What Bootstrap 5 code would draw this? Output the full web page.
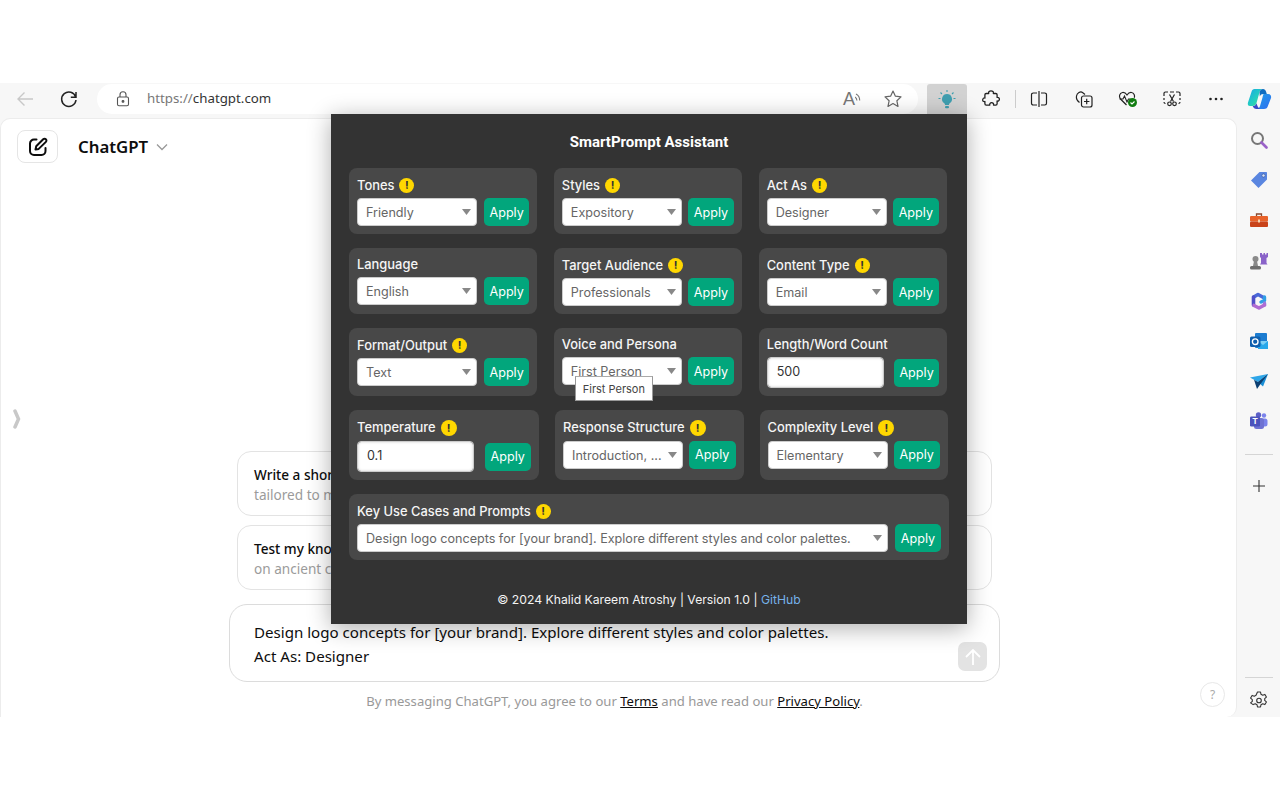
<!DOCTYPE html>
<html lang="en">
<head>
<meta charset="utf-8">
<title>SmartPrompt Assistant</title>
<link href="https://cdn.jsdelivr.net/npm/bootstrap@5.3.0/dist/css/bootstrap.min.css" rel="stylesheet">
<style>
html,body{height:800px;overflow:hidden;background:#fff}
body{font-family:"Noto Sans",sans-serif;color:#0d0d0d}
.band{height:83px}
.browser{height:634px;background:#f7f7f7}
.toolbar{height:35px;padding:1px 0 4px 3px}
.tb-slot{width:44px;height:30px;flex:none}
.tb-wide{width:46px}
.tb-last{width:42px}
.urlbar{flex:none;width:821px;height:30px;margin-left:6px;border-radius:15px;background:#fff;padding:0 15px 0 19px;font-size:13.3px;color:#777}
.urlbar b{font-weight:400;color:#333}
.url-text{margin-left:17px}
.ra-a{font-family:"Liberation Sans",sans-serif;font-size:18px;line-height:22px;color:#777}
.ra-gap{margin-right:20px}
.active-ext{flex:none;width:40px;height:30px;background:#d2d2d2;border-radius:3px 3px 0 0;margin:0 2px 0 9px}
.sep-v{flex:none;width:1px;height:18px;background:#ccc;margin-left:2px}
.chat{width:1237px;height:599px;background:#fff;border:1px solid #ececec;border-bottom:0;border-radius:10px 10px 10px 0;padding-right:8px;position:relative}
.new-btn{width:41px;height:33px;border:1px solid #e5e5e5;border-radius:8px;margin:11px 0 0 16px}
.brand-name{font-size:16.8px;font-weight:600;margin:11px 0 0 20px;line-height:33px;color:#0d0d0d}
.sugg{width:755px;height:65px;border:1px solid #e3e3e3;border-radius:14px;padding:13px 16px;font-size:13.6px;line-height:20px;margin-bottom:9px}
.sugg .t1{font-weight:500}
.sugg .t2{color:#9b9b9b}
.chat-foot{margin-bottom:6px}
.composer{width:771px;height:78px;border:1px solid #dcdcdc;border-radius:18px;padding:15px 24px;font-size:15.1px;line-height:24px;margin-top:5px;position:relative}
.send{position:absolute;right:12px;bottom:10px;width:29px;height:29px;background:#e3e3e3;border-radius:7px}
.legal{font-size:13.1px;line-height:20px;color:#999;margin-top:9px}
.legal a{color:#0d0d0d}
.handle{position:absolute;left:11px;top:286px}
.help{position:absolute;right:11px;bottom:10px;width:25px;height:25px;border:1px solid #e8e8e8;border-radius:50%;font-size:12px;color:#aaa}
.side{width:43px;height:599px}
.side-slot{height:40.2px;flex:none}
.side-first{margin-top:2px}
.side-sep{width:28px;height:1px;background:#d5d5d5;flex:none}
.sep-top{margin-top:12px}
.plus-slot{margin-top:11px}
.sep-bot{margin-bottom:5px}
.gear-slot{height:34px}
.popup{position:absolute;left:331px;top:114px;width:636px;height:510px;background:#333;box-shadow:0 4px 22px rgba(0,0,0,.32);padding:0 0 0 18px;font-family:"Inter",sans-serif;color:#fff}
.pop-title{font-family:"Roboto",sans-serif;font-weight:700;font-size:15px;line-height:20px;text-align:center;margin:18px 0 16px -18px}
.grid3{display:grid;grid-template-columns:repeat(3,1fr);column-gap:16.5px;width:598px;margin-bottom:14px}
.grid3b{grid-template-columns:190px 188.5px 188.5px;column-gap:16px;width:599px}
.pnl{background:#484848;border-radius:8px;padding:8px}
.pnl-wide{width:600px}
.lab{font-size:12.9px;font-weight:500;line-height:17px;height:21px;white-space:nowrap;color:#f5f5f5;display:flex;align-items:flex-start}
.lab-i{height:22px;line-height:19px}
.lab-t{height:23px;line-height:19px}
.warn{display:inline-flex;align-items:center;justify-content:center;flex:none;width:15px;height:15px;background:#ffd700;border-radius:50%;color:#333;font-size:11px;font-weight:700;line-height:1;margin:2px 0 0 5px}
.lab-t .warn{width:16px;height:16px}
.sel.form-select{width:120px;flex:none;height:28px;min-height:0;padding:1px 18px 0 8px;font-size:12.6px;line-height:25px;color:#666;border:1px solid #ccc;border-radius:4px;background-image:url("data:image/svg+xml,%3Csvg xmlns='http://www.w3.org/2000/svg' width='9' height='6'%3E%3Cpath d='M0 0h9L4.500 6z' fill='%23888'/%3E%3C/svg%3E");background-position:right 5px center;background-size:9px 6px;white-space:nowrap;overflow:hidden}
.sel-long.form-select{width:531px}
.num.form-control{width:117px;flex:none;height:31px;min-height:0;padding:0 9px 2px;font-size:12.6px;color:#333;border:1px solid #ccc;border-radius:4px;box-shadow:inset 0 0 3px rgba(0,0,0,.18)}
.go.btn{flex:1 1 0;min-width:0;height:28px;padding:1px 0 0;margin-left:7px;font-size:12.6px;line-height:26px;background:#02a67c;border:0;border-radius:5px;color:#fff}
.fld .go.btn{margin-left:6px}
.fld-n .go.btn{margin-left:10.500px}
.fld-n .go.btn,.grid3b .go.btn{padding:0}
.mid{position:relative}
.tip{position:absolute;left:13px;top:19px;width:78px;height:25px;background:#fff;border:1px solid #999;border-top-color:#aaa;font-size:11px;line-height:25px;text-align:center;color:#444;white-space:nowrap}
.pop-foot{font-size:12.2px;line-height:18px;text-align:center;margin:31px 0 0 -18px;color:#f4f4f4}
.pop-foot a{color:#76b2ea;text-decoration:none}
</style>
</head>
<body>
<div class="band"></div>
<div class="browser position-relative">
  <div class="toolbar d-flex align-items-center">
    <div class="tb-slot d-flex align-items-center justify-content-center">
      <svg width="20" height="18" viewBox="0 0 20 18" fill="none" stroke="#c8c8c8" stroke-width="1.400"><path d="M18 9H3M9.500 2.500 3 9l6.500 6.500"/></svg>
    </div>
    <div class="tb-slot d-flex align-items-center justify-content-center">
      <svg width="20" height="20" viewBox="0 0 20 20" fill="none" stroke="#222" stroke-width="1.500"><path d="M16.700 8A7.200 7.200 0 1 0 17 11M17 3v5.200h-5.200"/></svg>
    </div>
    <div class="urlbar d-flex align-items-center">
      <svg width="14" height="16" viewBox="0 0 14 16" fill="none" stroke="#555" stroke-width="1.100"><rect x="1.500" y="6" width="11" height="8.800" rx="1.500"/><path d="M4 6V3.800a3 3 0 0 1 6 0V6"/><circle cx="7" cy="10.400" r=".9" fill="#555"/></svg>
      <span class="url-text">https://<b>chatgpt.com</b></span>
      <span class="ms-auto d-flex align-items-center">
        <span class="ra-a">A</span>
        <svg class="ra-gap" width="8" height="14" viewBox="0 0 8 14" fill="none"><path d="M0 5c1.300.8 1.900 1.900 1.900 3.500M1 2c2.400 1.200 3.700 3.500 3.700 6.500" stroke="#777" stroke-width="1.100"/></svg>
        <svg width="20" height="20" viewBox="0 0 20 20" fill="none" stroke="#666" stroke-width="1.200" stroke-linejoin="round"><path d="m10 2 2.400 5.200 5.600.7-4.100 3.900 1.100 5.600L10 14.600l-5 2.800 1.100-5.600L2 7.900l5.600-.7z"/></svg>
      </span>
    </div>
    <div class="active-ext d-flex align-items-center justify-content-center">
      <svg width="18" height="20" viewBox="0 0 18 20"><g fill="#3f9fb0"><path d="M9 5a5 5 0 0 0-3 9c.7.600 1 1 1 2h4c0-1 .3-1.400 1-2a5 5 0 0 0-3-9z"/><rect x="7" y="17" width="4" height="2.200" rx="1"/></g><path d="M9 1v2M2.500 3.500 4 5M15.500 3.500 14 5M.5 9.500h2M15.500 9.500h2" stroke="#3f9fb0" stroke-width="1.100"/></svg>
    </div>
    <div class="tb-slot d-flex align-items-center justify-content-center">
      <svg width="18" height="18" viewBox="0 0 18 18" fill="none" stroke="#222" stroke-width="1.300" stroke-linejoin="round"><path d="M6.700 3.500C6.200 1.800 7.600.8 9 .8s2.900 1 2.300 2.700h2.500c.8 0 1.300.5 1.300 1.300v2.600c1.300-.3 2.300.6 2.300 1.800s-1 2.100-2.300 1.800v2.800c0 .8-.5 1.300-1.300 1.300h-2.300c.4-1.500-.7-2.500-1.900-2.500s-2.200 1-1.800 2.500H4.200c-.8 0-1.300-.5-1.300-1.300v-2.300C1.600 12.100.7 11.100.7 9.900s.9-2.200 2.200-1.900V4.800c0-.8.500-1.300 1.300-1.300z"/></svg>
    </div>
    <div class="sep-v"></div>
    <div class="tb-slot tb-wide d-flex align-items-center justify-content-center">
      <svg width="18" height="18" viewBox="0 0 18 18" fill="none" stroke="#222" stroke-width="1.200"><path d="M7 3H3.200A1.700 1.700 0 0 0 1.500 4.700v8.600A1.700 1.700 0 0 0 3.200 15H7M11 3h3.800a1.700 1.700 0 0 1 1.700 1.700v8.600a1.700 1.700 0 0 1-1.700 1.700H11M9 1v16"/></svg>
    </div>
    <div class="tb-slot d-flex align-items-center justify-content-center">
      <svg width="18" height="18" viewBox="0 0 18 18" fill="none" stroke="#222" stroke-width="1.200" stroke-linejoin="round"><path d="M4.500 12.500C2.500 11 1 8.500 1.500 6 2 3 5.500 1 7.500 2.500L10 4.500"/><rect x="6.500" y="6" width="10.500" height="11" rx="2"/><path d="M11.700 8.800v5.400M9 11.500h5.400"/></svg>
    </div>
    <div class="tb-slot d-flex align-items-center justify-content-center">
      <svg width="20" height="18" viewBox="0 0 20 18" fill="none"><path d="M8.500 15 2.500 9C.5 6.800 1.500 3 4.500 2.500c2-.3 3.500 1 4.500 2.500 1-1.500 2.500-2.800 4.500-2.500 2.500.4 3.600 3 2.800 5.200" stroke="#222" stroke-width="1.200"/><path d="M1.500 9h3.500l1.500-3 2.500 6 1.500-3h2" stroke="#222" stroke-width="1.100"/><circle cx="14.500" cy="12.500" r="4.500" fill="#107c10"/><path d="m12.500 12.500 1.500 1.500 2.500-2.500" stroke="#fff" stroke-width="1.100"/></svg>
    </div>
    <div class="tb-slot d-flex align-items-center justify-content-center">
      <svg width="18" height="16" viewBox="0 0 18 16" fill="none" stroke="#222" stroke-width="1.200"><path d="M1 5V2.500C1 1.600 1.600 1 2.500 1H5M7 1h4M13 1h2.500c.9 0 1.500.6 1.500 1.500V5M17 7v2M1 7v2M1 11c0 1 .6 1.500 1.500 1.500M17 11c0 1-.6 1.500-1.500 1.500"/><path d="m6.500 3.500 4 7M11.500 3.500l-4 7"/><circle cx="6.500" cy="12.800" r="1.800"/><circle cx="11.500" cy="12.800" r="1.800"/></svg>
    </div>
    <div class="tb-slot d-flex align-items-center justify-content-center">
      <svg width="16" height="4" viewBox="0 0 16 4" fill="#222"><circle cx="2.500" cy="2" r="1.300"/><circle cx="8" cy="2" r="1.300"/><circle cx="13.500" cy="2" r="1.300"/></svg>
    </div>
    <div class="tb-slot tb-last d-flex align-items-center justify-content-center">
      <svg width="25" height="22" viewBox="0 0 25 22"><defs><linearGradient id="cpa" x1="0" y1="0" x2="1" y2="1"><stop offset="0" stop-color="#17a6e6"/><stop offset=".55" stop-color="#23cfc0"/><stop offset="1" stop-color="#4bd68a"/></linearGradient><linearGradient id="cpb" x1="0" y1="0" x2="1" y2="1"><stop offset="0" stop-color="#1f9fe8"/><stop offset="1" stop-color="#2f6df0"/></linearGradient></defs><path d="M7.500 1h8c-2 .5-2.600 1.800-3 3.200L9.500 15c-.5 2-1.800 3-3.800 3H3C1 18 .4 16.200 1 14.500L4.600 3.400C5 2 6 1 7.500 1z" fill="url(#cpa)"/><path d="M12.500 4.200C13 2.500 14 1 16 1c1.500 0 2.500 1 3 2.500l.8 2.500h-3.500c-1.700 0-3 .8-3.500 2.500z" fill="#0f6cc0"/><path d="M16.500 6H21c2.500 0 3.500 2 3 4l-3.300 8.500c-.7 1.800-2 2.500-3.700 2.500H9.500c1.800-.3 3-1.300 3.500-3l2.500-8.500c.3-1.300.5-2 1-3.500z" fill="url(#cpb)"/><path d="M5.700 18c1.800 0 3.200-.8 3.800-2.800l.7 2c.6 1.800 1.500 3 3 3.800H9.500c-2 0-3-1.200-3.800-3z" fill="#3948c8"/></svg>
    </div>
  </div>
  <div class="d-flex">
    <div class="chat d-flex flex-column">
      <div class="d-flex">
        <div class="new-btn d-flex align-items-center justify-content-center">
          <svg width="22" height="22" viewBox="0 0 22 22" fill="none" stroke="#0d0d0d" stroke-width="2" stroke-linecap="round" stroke-linejoin="round"><path d="M9.500 3.500H7A4 4 0 0 0 3 7.500V15a4 4 0 0 0 4 4h7.500a4 4 0 0 0 4-4v-3"/><path d="m8.500 13.500.7-3.200 7-7c.8-.8 2-.8 2.700 0 .7.700.7 1.900 0 2.600l-7.200 7z"/></svg>
        </div>
        <div class="brand-name d-flex align-items-center">ChatGPT
          <svg class="ms-2" width="12" height="8" viewBox="0 0 12 8" fill="none" stroke="#999" stroke-width="1.300"><path d="m1 1.500 5 5 5-5"/></svg>
        </div>
      </div>
      <div class="flex-grow-1"></div>
      <div class="chat-foot d-flex flex-column align-items-center">
        <div class="sugg"><div class="t1">Write a shor</div><div class="t2">tailored to m</div></div>
        <div class="sugg"><div class="t1">Test my kno</div><div class="t2">on ancient c</div></div>
        <div class="composer">
          <div>Design logo concepts for [your brand]. Explore different styles and color palettes.</div>
          <div>Act As: Designer</div>
          <div class="send d-flex align-items-center justify-content-center">
            <svg width="20" height="20" viewBox="0 0 20 20" fill="none" stroke="#fff" stroke-width="1.800"><path d="M10 18V3M3 10l7-7 7 7"/></svg>
          </div>
        </div>
        <div class="legal">By messaging ChatGPT, you agree to our <a href="#">Terms</a> and have read our <a href="#">Privacy Policy</a>.</div>
      </div>
      <div class="handle">
        <svg width="10" height="20" viewBox="0 0 10 20" fill="none" stroke="#c8c8c8" stroke-width="3.500" stroke-linecap="round"><path d="m3 2 3.500 8L3 18"/></svg>
      </div>
      <div class="help d-flex align-items-center justify-content-center">?</div>
    </div>
    <div class="side d-flex flex-column align-items-center">
      <div class="side-slot side-first d-flex align-items-center justify-content-center">
        <svg width="18" height="18" viewBox="0 0 18 18" fill="none"><circle cx="7.500" cy="7.500" r="5.500" stroke="#777" stroke-width="2"/><path d="m11.500 11.500 5 5" stroke="#9a62c8" stroke-width="2.600" stroke-linecap="round"/></svg>
      </div>
      <div class="side-slot d-flex align-items-center justify-content-center">
        <svg width="18" height="18" viewBox="0 0 18 18"><path d="M9.500 1H16c.6 0 1 .4 1 1v6.500L8.500 17 1 9.500z" fill="#5a86e0"/><circle cx="13.500" cy="4.500" r="1.600" fill="#dde6fa" stroke="#33508f" stroke-width=".6"/></svg>
      </div>
      <div class="side-slot d-flex align-items-center justify-content-center">
        <svg width="18" height="16" viewBox="0 0 18 16"><path d="M6.500 4V2h5v2" fill="none" stroke="#8a4a30" stroke-width="1.300"/><rect y="4" width="18" height="5.500" rx="1" fill="#e8622a"/><rect y="9.500" width="18" height="5.500" rx="1" fill="#c9431a"/><rect x="8" y="7.500" width="2" height="3" fill="#f5d5b0"/></svg>
      </div>
      <div class="side-slot d-flex align-items-center justify-content-center">
        <svg width="20" height="18" viewBox="0 0 20 18"><circle cx="6.500" cy="7" r="3" fill="#8a8a8a"/><path d="M5 9h3l1 5H4z" fill="#8a8a8a"/><rect x="1" y="14" width="11" height="3.500" rx="1.500" fill="#6e6e6e"/><path d="M11 1h2v1.500h1.500V1h1.500v1.500h1.500V1h1.500v4l-1.500 1v5l1 1.500H11l1-1.500V6l-1-1z" fill="#8a63c9"/></svg>
      </div>
      <div class="side-slot d-flex align-items-center justify-content-center">
        <svg width="18" height="20" viewBox="0 0 18 20" fill="none"><path d="M3.700 6 8 3.500l5.500 3" stroke="#4a68d8" stroke-width="3.600" stroke-linecap="round" stroke-linejoin="round"/><path d="M3.500 6v8" stroke="#4f4fc8" stroke-width="3.600" stroke-linecap="round"/><path d="M14.500 6v3.500L11 11" stroke="#2f9fe6" stroke-width="3.400" stroke-linecap="round" stroke-linejoin="round"/><path d="M14.500 12v2" stroke="#8f7fe0" stroke-width="3.400" stroke-linecap="round"/><path d="M4 14.500 9 17l5.500-3" stroke="#b06cd2" stroke-width="3.600" stroke-linecap="round" stroke-linejoin="round"/></svg>
      </div>
      <div class="side-slot d-flex align-items-center justify-content-center">
        <svg width="18" height="17" viewBox="0 0 18 17"><rect x="5" y="0" width="12" height="15" rx="1" fill="#1c7cd0"/><path d="M8 8h10v8H8z" fill="#28a8ea"/><path d="m8 8 5 4 5-4z" fill="#7fd0f5"/><rect y="3.500" width="10.500" height="10.500" rx="1.500" fill="#0f5fae"/><circle cx="5.200" cy="8.700" r="2.800" fill="none" stroke="#fff" stroke-width="1.400"/></svg>
      </div>
      <div class="side-slot d-flex align-items-center justify-content-center">
        <svg width="18" height="15" viewBox="0 0 18 15"><path d="M0 3.500 18 0 8 8z" fill="#2ea6e8"/><path d="M18 0 8 8l5 4.500z" fill="#1b8fd6"/><path d="m4 5.800 4 2.200 10-8-7.500 10L7 15z" fill="#0c3f72"/></svg>
      </div>
      <div class="side-slot d-flex align-items-center justify-content-center">
        <svg width="18" height="18" viewBox="0 0 18 18"><circle cx="14" cy="3.500" r="2.200" fill="#7b83eb"/><rect x="11" y="6.500" width="6.500" height="8" rx="2.500" fill="#7b83eb"/><circle cx="8.500" cy="3" r="2.700" fill="#5b5fc7"/><rect x="4" y="6" width="10" height="11" rx="2.500" fill="#6e72d2"/><rect y="4.500" width="10" height="10" rx="1.200" fill="#4b53bc"/><text x="5" y="12.300" text-anchor="middle" font-family="Liberation Sans" font-size="8.500" font-weight="700" fill="#fff">T</text></svg>
      </div>
      <div class="side-sep sep-top"></div>
      <div class="side-slot plus-slot d-flex align-items-center justify-content-center">
        <svg width="14" height="14" viewBox="0 0 14 14" stroke="#333" stroke-width="1.100"><path d="M7 1v12M1 7h12"/></svg>
      </div>
      <div class="flex-grow-1"></div>
      <div class="side-sep sep-bot"></div>
      <div class="gear-slot d-flex align-items-center justify-content-center">
        <svg width="18" height="18" viewBox="0 0 18 18" fill="none" stroke="#333" stroke-width="1.100" stroke-linejoin="round"><path d="M7.500 1h3l.5 2.300 1.700.9 2.200-.8 1.500 2.700-1.700 1.500v1.800l1.700 1.500-1.500 2.700-2.200-.8-1.700.9-.5 2.300h-3l-.5-2.300-1.700-.9-2.200.8L.6 11.900l1.700-1.500V8.600L.6 7.100l1.500-2.700 2.200.8L6 4.300z"/><circle cx="9" cy="9.500" r="2.300"/></svg>
      </div>
    </div>
  </div>
</div>
<div class="band"></div>

<div class="popup">
  <div class="pop-title">SmartPrompt Assistant</div>

  <div class="grid3">
    <div class="pnl"><div class="lab lab-i">Tones<span class="warn">!</span></div><div class="d-flex"><select class="form-select sel"><option>Friendly</option></select><button class="btn go">Apply</button></div></div>
    <div class="pnl"><div class="lab lab-i">Styles<span class="warn">!</span></div><div class="d-flex fld"><select class="form-select sel"><option>Expository</option></select><button class="btn go">Apply</button></div></div>
    <div class="pnl"><div class="lab lab-i">Act As<span class="warn">!</span></div><div class="d-flex fld"><select class="form-select sel"><option>Designer</option></select><button class="btn go">Apply</button></div></div>
  </div>

  <div class="grid3">
    <div class="pnl"><div class="lab">Language</div><div class="d-flex"><select class="form-select sel"><option>English</option></select><button class="btn go">Apply</button></div></div>
    <div class="pnl"><div class="lab lab-i">Target Audience<span class="warn">!</span></div><div class="d-flex fld"><select class="form-select sel"><option>Professionals</option></select><button class="btn go">Apply</button></div></div>
    <div class="pnl"><div class="lab lab-i">Content Type<span class="warn">!</span></div><div class="d-flex fld"><select class="form-select sel"><option>Email</option></select><button class="btn go">Apply</button></div></div>
  </div>

  <div class="grid3">
    <div class="pnl"><div class="lab lab-i">Format/Output<span class="warn">!</span></div><div class="d-flex"><select class="form-select sel"><option>Text</option></select><button class="btn go">Apply</button></div></div>
    <div class="pnl"><div class="lab">Voice and Persona</div><div class="d-flex fld mid"><select class="form-select sel"><option>First Person</option></select><button class="btn go">Apply</button><div class="tip">First Person</div></div></div>
    <div class="pnl"><div class="lab">Length/Word Count</div><div class="d-flex align-items-center fld-n"><input class="form-control num" value="500"><button class="btn go">Apply</button></div></div>
  </div>

  <div class="grid3 grid3b">
    <div class="pnl"><div class="lab lab-t">Temperature<span class="warn">!</span></div><div class="d-flex align-items-center fld-n"><input class="form-control num" value="0.1"><button class="btn go">Apply</button></div></div>
    <div class="pnl"><div class="lab lab-t">Response Structure<span class="warn">!</span></div><div class="d-flex fld"><select class="form-select sel"><option>Introduction, ...</option></select><button class="btn go">Apply</button></div></div>
    <div class="pnl"><div class="lab lab-t">Complexity Level<span class="warn">!</span></div><div class="d-flex fld"><select class="form-select sel"><option>Elementary</option></select><button class="btn go">Apply</button></div></div>
  </div>

  <div class="pnl pnl-wide">
    <div class="lab lab-i">Key Use Cases and Prompts<span class="warn">!</span></div>
    <div class="d-flex"><select class="form-select sel sel-long"><option>Design logo concepts for [your brand]. Explore different styles and color palettes.</option></select><button class="btn go">Apply</button></div>
  </div>

  <div class="pop-foot">© 2024 Khalid Kareem Atroshy | Version 1.0 | <a href="#">GitHub</a></div>
</div>
<script src="https://cdn.jsdelivr.net/npm/bootstrap@5.3.0/dist/js/bootstrap.bundle.min.js"></script>
</body>
</html>
